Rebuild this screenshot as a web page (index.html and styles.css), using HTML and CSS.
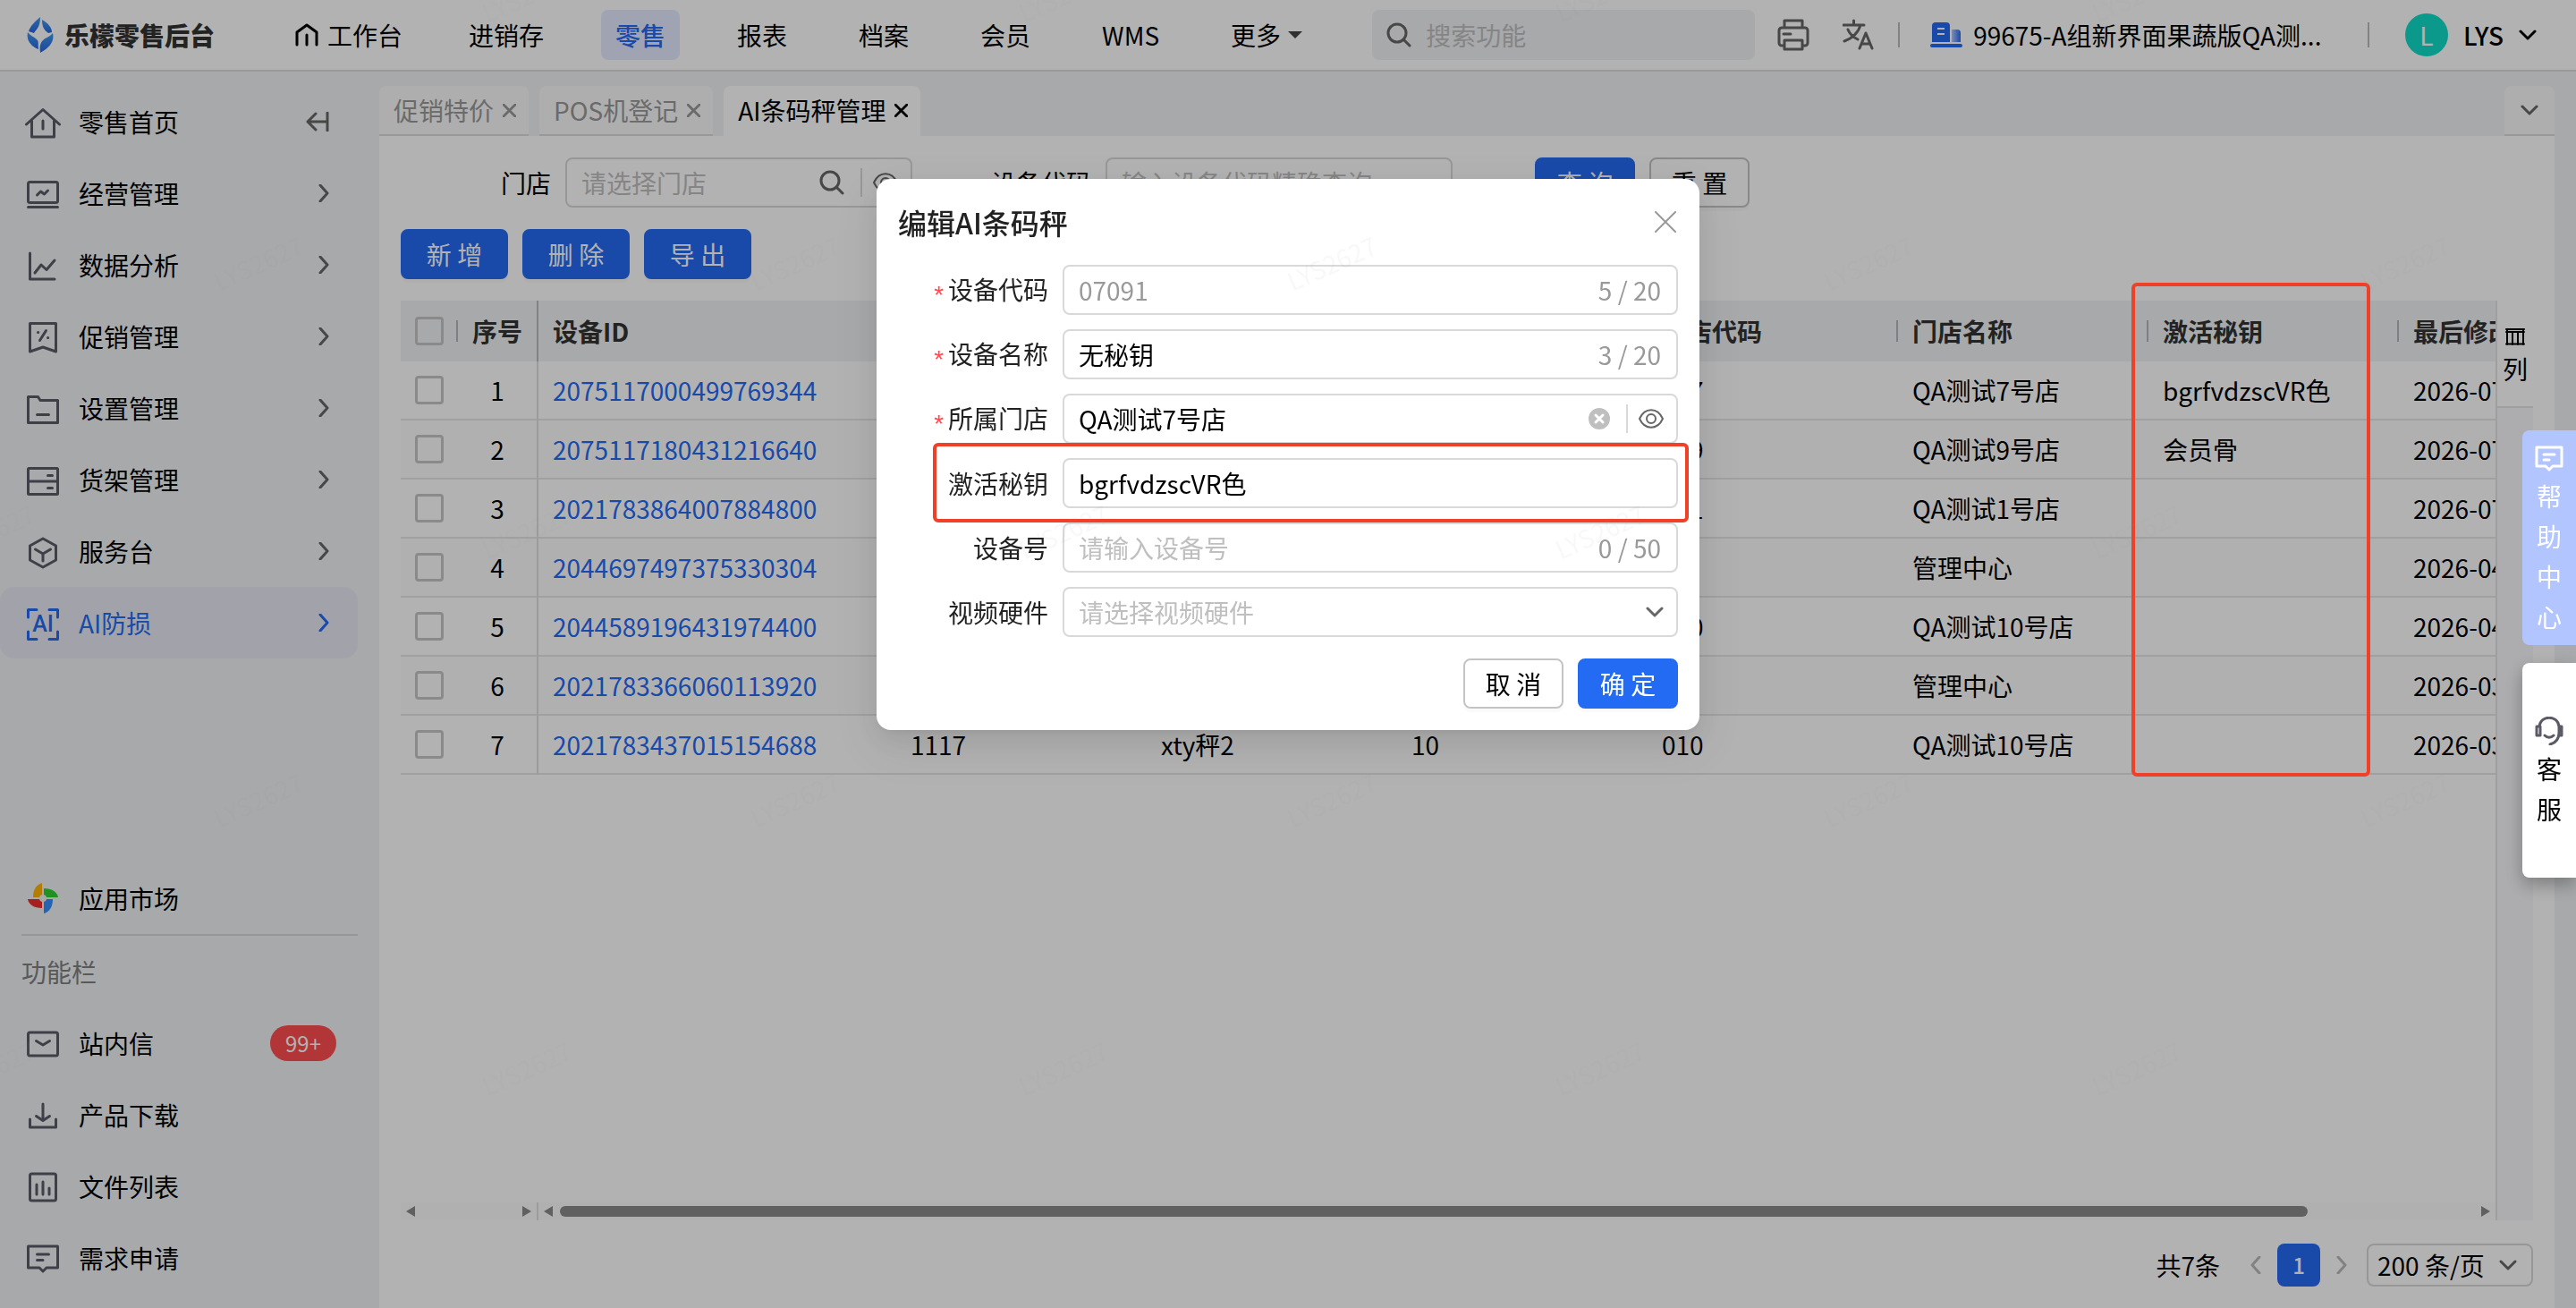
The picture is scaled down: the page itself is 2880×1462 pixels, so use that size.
FILE: index.html
```html
<!DOCTYPE html>
<html lang="zh-CN">
<head>
    <meta charset="UTF-8">
    <meta name="viewport" content="width=device-width, initial-scale=1.0">
    <title>乐檬零售后台</title>
    <link rel="stylesheet" href="styles.css">
</head>
<body>
    <div class="app">
        <header class="topbar">
            <a class="brand" href="#">
                <svg class="brand-logo" viewBox="0 0 30 40" aria-hidden="true">
                    <defs>
                        <linearGradient id="leaf" x1="0" y1="0" x2="0" y2="1">
                            <stop offset="0" stop-color="#3f9bf0"/>
                            <stop offset="1" stop-color="#2a66e0"/>
                        </linearGradient>
                    </defs>
                    <g fill="url(#leaf)">
                        <path d="M15 0C9 5 4 10 2 16L8 18C10 14 15 12 15 0Z"/>
                        <path d="M17 3C24 7 28 12 28 17L24 18C20 15 17 12 17 3Z"/>
                        <path d="M1 17C-1 26 5 33 13 36C12 29 14 28 11 25C8 22 4 21 1 17Z"/>
                        <path d="M29 18C31 27 26 34 15 40C14 33 15 29 18 26C21 23 26 22 29 18Z"/>
                    </g>
                </svg>
                <span>乐檬零售后台</span>
            </a>
            <nav class="main-nav">
                <a class="nav-item nav-home" href="#">
                    <svg class="home-icon" viewBox="0 0 26 26" aria-hidden="true"><path d="M2 24V10L13 2L24 10V24M13 13V24"/></svg>
                    工作台
                </a>
                <a class="nav-item" href="#">进销存</a>
                <a class="nav-item active" href="#">零售</a>
                <a class="nav-item" href="#">报表</a>
                <a class="nav-item" href="#">档案</a>
                <a class="nav-item" href="#">会员</a>
                <a class="nav-item" href="#">WMS</a>
                <a class="nav-item" href="#">更多<span class="caret"></span></a>
            </nav>
            <label class="search">
                <svg class="icon-28" viewBox="0 0 28 28" aria-hidden="true"><circle cx="12" cy="12" r="10"/><path d="M19 19l7 7"/></svg>
                <input type="text" placeholder="搜索功能" aria-label="搜索功能">
            </label>
            <div class="tools">
                <button class="icon-btn" type="button" aria-label="打印">
                    <svg class="icon-36" viewBox="0 0 36 36" aria-hidden="true"><path d="M8 10V2h20v8M8 30H5a3 3 0 0 1-3-3V13a3 3 0 0 1 3-3h26a3 3 0 0 1 3 3v14a3 3 0 0 1-3 3h-3M8 24h20v10H8zM7 17h8"/></svg>
                </button>
                <button class="icon-btn" type="button" aria-label="语言">
                    <svg class="icon-36" viewBox="0 0 36 36" aria-hidden="true"><path d="M1 7h23M12.500 2v5M20 7C18 15 11 22 2 25M6 12c2 5 7 9 11 11M19 33l7-17 7 17M21 28h10"/></svg>
                </button>
            </div>
            <div class="company">
                <svg class="icon-36" viewBox="0 0 36 36" aria-hidden="true">
                    <defs>
                        <linearGradient id="tower"><stop offset="0" stop-color="#b5c9ff"/><stop offset="1" stop-color="#246bf3"/></linearGradient>
                    </defs>
                    <path fill="#246bf3" d="M2 8a4 4 0 0 1 4-4h12a4 4 0 0 1 4 4v18H2z"/>
                    <path fill="url(#tower)" d="M24 12h6a4 4 0 0 1 4 4v10H24z"/>
                    <rect fill="#246bf3" y="28" width="36" height="4" rx="2"/>
                    <path fill="#fff" d="M8 10h8v2H8zM8 16h8v2H8z"/>
                </svg>
                <span>99675-A组新界面果蔬版QA测...</span>
            </div>
            <button class="user" type="button">
                <span class="avatar">L</span>
                <span>LYS</span>
                <svg class="chevron" viewBox="0 0 20 12" aria-hidden="true"><path d="M2 2l8 8 8-8"/></svg>
            </button>
        </header>

        <div class="body">
            <aside class="sidebar">
                <a class="side-item" href="#">
                    <svg class="side-icon" viewBox="0 0 40 40" aria-hidden="true"><path d="M1.500 23L20 6.500L38.500 23M7.500 19V37H32.500V19M20 19V28"/></svg>
                    <span>零售首页</span>
                    <svg class="fold" viewBox="0 0 26 22" aria-hidden="true"><path d="M11 2L2 11L11 20M2 11H24M24 1V21"/></svg>
                </a>
                <a class="side-item" href="#">
                    <svg class="side-icon" viewBox="0 0 40 40" aria-hidden="true"><rect x="3.500" y="7.500" width="33" height="23" rx="2"/><path d="M3.500 35.500H36.500M13.500 22l4-4 4 3 4-4"/></svg>
                    <span>经营管理</span>
                    <svg class="arrow" viewBox="0 0 12 20" aria-hidden="true"><path d="M2 1l8 9-8 9"/></svg>
                </a>
                <a class="side-item" href="#">
                    <svg class="side-icon" viewBox="0 0 40 40" aria-hidden="true"><path d="M5.500 7V36H33M11 29L18 20L24 25.500L33 15"/></svg>
                    <span>数据分析</span>
                    <svg class="arrow" viewBox="0 0 12 20" aria-hidden="true"><path d="M2 1l8 9-8 9"/></svg>
                </a>
                <a class="side-item" href="#">
                    <svg class="side-icon" viewBox="0 0 40 40" aria-hidden="true"><path d="M5.500 5.500H34.500V37L20 32L5.500 37ZM23.500 13.500L16.500 24.500M14.500 15.500h.2M25.500 21.500h.2"/></svg>
                    <span>促销管理</span>
                    <svg class="arrow" viewBox="0 0 12 20" aria-hidden="true"><path d="M2 1l8 9-8 9"/></svg>
                </a>
                <a class="side-item" href="#">
                    <svg class="side-icon" viewBox="0 0 40 40" aria-hidden="true"><path d="M3.500 7.500H14.500L17 11.500H36.500V36.500H3.500ZM13.500 27.500H26.500"/></svg>
                    <span>设置管理</span>
                    <svg class="arrow" viewBox="0 0 12 20" aria-hidden="true"><path d="M2 1l8 9-8 9"/></svg>
                </a>
                <a class="side-item" href="#">
                    <svg class="side-icon" viewBox="0 0 40 40" aria-hidden="true"><rect x="3.500" y="7.500" width="33" height="29" rx="1"/><path d="M3.500 22H36.500M25.500 15.500H30.500M25.500 29.500H30.500"/></svg>
                    <span>货架管理</span>
                    <svg class="arrow" viewBox="0 0 12 20" aria-hidden="true"><path d="M2 1l8 9-8 9"/></svg>
                </a>
                <a class="side-item" href="#">
                    <svg class="side-icon" viewBox="0 0 40 40" aria-hidden="true"><path d="M20 6L34.500 14V30L20 38L5.500 30V14ZM11.500 18L20 23L28.500 18M20 23V31"/></svg>
                    <span>服务台</span>
                    <svg class="arrow" viewBox="0 0 12 20" aria-hidden="true"><path d="M2 1l8 9-8 9"/></svg>
                </a>
                <a class="side-item active" href="#">
                    <svg class="side-icon" viewBox="0 0 40 40" aria-hidden="true"><path d="M3.500 14V5.500H13M27 5.500H36.500V14M36.500 30V38.500H27M13 38.500H3.500V30"/><text class="icon-text" x="20" y="30">AI</text></svg>
                    <span>AI防损</span>
                    <svg class="arrow" viewBox="0 0 12 20" aria-hidden="true"><path d="M2 1l8 9-8 9"/></svg>
                </a>

                <div class="side-bottom">
                    <a class="side-item" href="#">
                        <svg class="market-icon" viewBox="0 0 40 40" aria-hidden="true">
                            <path fill="#ffb300" d="M19 3V19H9C9 11 12 5 19 3Z"/>
                            <path fill="#2ed12e" d="M21 9C30 9 36 13 37 19H21Z"/>
                            <path fill="#3490ff" d="M21 21H31C31 29 28 35 21 37Z"/>
                            <path fill="#f02d2d" d="M3 21H19V31C10 31 4 27 3 21Z"/>
                            <circle fill="#f0f2f5" cx="20" cy="20" r="4"/>
                        </svg>
                        <span>应用市场</span>
                    </a>
                    <p class="side-title">功能栏</p>
                    <a class="side-item" href="#">
                        <svg class="side-icon" viewBox="0 0 40 40" aria-hidden="true"><rect x="3.500" y="8" width="33" height="26" rx="2"/><path d="M12.500 17.500L20 22L27.500 17.500"/></svg>
                        <span>站内信</span>
                        <span class="badge">99+</span>
                    </a>
                    <a class="side-item" href="#">
                        <svg class="side-icon" viewBox="0 0 40 40" aria-hidden="true"><path d="M20 8V26M12.500 21.500L20 26.500L27.500 21.500M5.500 25V34H34.500V25"/></svg>
                        <span>产品下载</span>
                    </a>
                    <a class="side-item" href="#">
                        <svg class="side-icon" viewBox="0 0 40 40" aria-hidden="true"><rect x="5.500" y="6" width="29" height="30" rx="2"/><path d="M13 18V29M20 15V29M27 22V29"/></svg>
                        <span>文件列表</span>
                    </a>
                    <a class="side-item" href="#">
                        <svg class="side-icon" viewBox="0 0 40 40" aria-hidden="true"><path d="M3.500 7H36.500V31H24L20 35L16 31H3.500ZM13.500 16H26.500M13.500 22.500H20"/></svg>
                        <span>需求申请</span>
                    </a>
                </div>
            </aside>

            <main class="content">
                <div class="tabs">
                    <div class="tab">促销特价<svg class="tab-close" viewBox="0 0 16 16" aria-hidden="true"><path d="M1 1l14 14M15 1L1 15"/></svg></div>
                    <div class="tab">POS机登记<svg class="tab-close" viewBox="0 0 16 16" aria-hidden="true"><path d="M1 1l14 14M15 1L1 15"/></svg></div>
                    <div class="tab active">AI条码秤管理<svg class="tab-close" viewBox="0 0 16 16" aria-hidden="true"><path d="M1 1l14 14M15 1L1 15"/></svg></div>
                    <button class="tab tab-more" type="button" aria-label="更多标签"><svg class="chevron" viewBox="0 0 20 12" aria-hidden="true"><path d="M2 2l8 8 8-8"/></svg></button>
                </div>

                <section class="panel">
                    <form class="filters">
                        <label class="filter-label" for="f-store">门店</label>
                        <div class="control">
                            <input id="f-store" type="text" placeholder="请选择门店">
                            <svg class="icon-28" viewBox="0 0 28 28" aria-hidden="true"><circle cx="12" cy="12" r="10"/><path d="M19 19l7 7"/></svg>
                            <span class="split"></span>
                            <svg class="icon-28 eye" viewBox="0 0 28 28" aria-hidden="true"><path d="M1 14C7 1 21 1 27 14C21 27 7 27 1 14Z"/><circle cx="14" cy="14" r="5"/></svg>
                        </div>
                        <label class="filter-label" for="f-code">设备代码</label>
                        <div class="control">
                            <input id="f-code" type="text" placeholder="输入设备代码精确查询">
                        </div>
                        <div class="filter-actions">
                            <button class="btn primary" type="button">查 询</button>
                            <button class="btn" type="button">重 置</button>
                        </div>
                    </form>

                    <div class="actions">
                        <button class="btn primary wide" type="button">新 增</button>
                        <button class="btn primary wide" type="button">删 除</button>
                        <button class="btn primary wide" type="button">导 出</button>
                    </div>

                    <div class="grid">
                        <div class="grid-main">
                            <div class="grid-view">
                                <table>
                                    <colgroup>
                                        <col class="c-check"><col class="c-no"><col class="c-id"><col class="c"><col class="c"><col class="c"><col class="c"><col class="c"><col class="c"><col class="c">
                                    </colgroup>
                                    <thead>
                                        <tr>
                                            <th><input type="checkbox" aria-label="全选"></th>
                                            <th class="no">序号</th>
                                            <th>设备ID</th>
                                            <th>设备代码</th>
                                            <th>设备名称</th>
                                            <th>设备号</th>
                                            <th>门店代码</th>
                                            <th>门店名称</th>
                                            <th>激活秘钥</th>
                                            <th>最后修改时间</th>
                                        </tr>
                                    </thead>
                                    <tbody>
                                        <tr><td><input type="checkbox" aria-label="选择 1"></td><td class="no">1</td><td><a href="#">2075117000499769344</a></td><td>07091</td><td>无秘钥</td><td></td><td>007</td><td>QA测试7号店</td><td>bgrfvdzscVR色</td><td>2026-07</td></tr>
                                        <tr><td><input type="checkbox" aria-label="选择 2"></td><td class="no">2</td><td><a href="#">2075117180431216640</a></td><td></td><td></td><td></td><td>009</td><td>QA测试9号店</td><td>会员骨</td><td>2026-07</td></tr>
                                        <tr><td><input type="checkbox" aria-label="选择 3"></td><td class="no">3</td><td><a href="#">2021783864007884800</a></td><td></td><td></td><td></td><td>001</td><td>QA测试1号店</td><td></td><td>2026-07</td></tr>
                                        <tr><td><input type="checkbox" aria-label="选择 4"></td><td class="no">4</td><td><a href="#">2044697497375330304</a></td><td></td><td></td><td></td><td>99</td><td>管理中心</td><td></td><td>2026-04</td></tr>
                                        <tr><td><input type="checkbox" aria-label="选择 5"></td><td class="no">5</td><td><a href="#">2044589196431974400</a></td><td></td><td></td><td></td><td>010</td><td>QA测试10号店</td><td></td><td>2026-04</td></tr>
                                        <tr><td><input type="checkbox" aria-label="选择 6"></td><td class="no">6</td><td><a href="#">2021783366060113920</a></td><td></td><td></td><td></td><td>99</td><td>管理中心</td><td></td><td>2026-03</td></tr>
                                        <tr><td><input type="checkbox" aria-label="选择 7"></td><td class="no">7</td><td><a href="#">2021783437015154688</a></td><td>1117</td><td>xty秤2</td><td>10</td><td>010</td><td>QA测试10号店</td><td></td><td>2026-03</td></tr>
                                    </tbody>
                                </table>
                            </div>
                            <div class="scrollbars">
                                <div class="scroll pinned"><span class="tri left"></span><span class="tri right"></span></div>
                                <div class="scroll"><span class="tri left"></span><span class="track"><span class="thumb"></span></span><span class="tri right"></span></div>
                            </div>
                        </div>
                        <div class="grid-side">
                            <button class="col-btn" type="button">
                                <svg viewBox="0 0 22 20" aria-hidden="true"><path d="M1 2H21M1 5H21M1 18.500H21M2 2V19M8 5V19M14 5V19M20 2V19"/></svg>
                                列
                            </button>
                        </div>
                    </div>

                    <div class="pager">
                        <span>共7条</span>
                        <button class="page-arrow" type="button" aria-label="上一页"><svg class="arrow" viewBox="0 0 12 20" aria-hidden="true"><path d="M10 1l-8 9 8 9"/></svg></button>
                        <button class="page-num" type="button">1</button>
                        <button class="page-arrow" type="button" aria-label="下一页"><svg class="arrow" viewBox="0 0 12 20" aria-hidden="true"><path d="M2 1l8 9-8 9"/></svg></button>
                        <div class="page-size">
                            <select aria-label="每页条数"><option>200 条/页</option></select>
                            <svg class="chevron" viewBox="0 0 20 12" aria-hidden="true"><path d="M2 2l8 8 8-8"/></svg>
                        </div>
                    </div>
                </section>
            </main>
        </div>
    </div>

    <div class="mask">
        <div class="modal" role="dialog" aria-labelledby="modal-title">
            <div class="modal-head">
                <h2 id="modal-title">编辑AI条码秤</h2>
                <button class="modal-close" type="button" aria-label="关闭"><svg viewBox="0 0 24 24" aria-hidden="true"><path d="M1 1l22 22M23 1L1 23"/></svg></button>
            </div>
            <form class="modal-form">
                <div class="row">
                    <label class="required" for="m-code">设备代码</label>
                    <div class="control"><input id="m-code" type="text" value="07091" disabled><span class="count">5 / 20</span></div>
                </div>
                <div class="row">
                    <label class="required" for="m-name">设备名称</label>
                    <div class="control"><input id="m-name" type="text" value="无秘钥"><span class="count">3 / 20</span></div>
                </div>
                <div class="row">
                    <label class="required" for="m-store">所属门店</label>
                    <div class="control">
                        <input id="m-store" type="text" value="QA测试7号店">
                        <svg class="clear" viewBox="0 0 24 24" aria-hidden="true"><circle cx="12" cy="12" r="12"/><path d="M8 8l8 8M16 8l-8 8"/></svg>
                        <span class="split"></span>
                        <svg class="icon-28 eye" viewBox="0 0 28 28" aria-hidden="true"><path d="M1 14C7 1 21 1 27 14C21 27 7 27 1 14Z"/><circle cx="14" cy="14" r="5"/></svg>
                    </div>
                </div>
                <div class="row marked">
                    <label for="m-key">激活秘钥</label>
                    <div class="control"><input id="m-key" type="text" value="bgrfvdzscVR色"></div>
                </div>
                <div class="row">
                    <label for="m-no">设备号</label>
                    <div class="control"><input id="m-no" type="text" placeholder="请输入设备号"><span class="count">0 / 50</span></div>
                </div>
                <div class="row">
                    <label for="m-video">视频硬件</label>
                    <div class="control">
                        <select id="m-video" class="empty"><option>请选择视频硬件</option></select>
                        <svg class="chevron" viewBox="0 0 20 12" aria-hidden="true"><path d="M2 2l8 8 8-8"/></svg>
                    </div>
                </div>
                <div class="modal-foot">
                    <button class="btn" type="button">取 消</button>
                    <button class="btn primary" type="button">确 定</button>
                </div>
            </form>
        </div>
    </div>

    <div class="column-mark"></div>

    <div class="floats">
        <button class="float help" type="button">
            <svg viewBox="0 0 32 32" aria-hidden="true"><path d="M2 4H30V25H20L16 29L12 25H2ZM10 12H22M10 18H16"/></svg>
            帮助中心
        </button>
        <button class="float service" type="button">
            <svg viewBox="0 0 32 32" aria-hidden="true"><path d="M5 11C6 -2 26 -2 27 11V18C27 25 24 29 17 31M5 11H2V21H6V11M27 11H30V21H27M11 21C14 24 18 24 21 21"/></svg>
            客服
        </button>
    </div>

    <svg class="watermark" aria-hidden="true">
        <defs>
            <pattern id="wm" x="145" y="122" width="600" height="600" patternUnits="userSpaceOnUse">
                <text x="100" y="204" transform="rotate(-24 100 204)">LYS2627</text>
                <text x="400" y="504" transform="rotate(-24 400 504)">LYS2627</text>
            </pattern>
        </defs>
        <rect width="100%" height="100%" fill="url(#wm)"/>
    </svg>
</body>
</html>
```

FILE: styles.css
```css
* {
    box-sizing: border-box;
    margin: 0;
    padding: 0;
}
body {
    font-family: "Noto Sans CJK SC", sans-serif;
    font-size: 28px;
    line-height: 44px;
    color: #000;
    overflow: hidden;
}
a {
    color: inherit;
    text-decoration: none;
}
button, input, select {
    font: inherit;
    color: inherit;
    background: none;
    border: none;
    outline: none;
}
button {
    cursor: pointer;
}
svg {
    display: block;
    flex: none;
    fill: none;
    stroke-linecap: round;
    stroke-linejoin: round;
}
.app {
    height: 100vh;
    display: flex;
    flex-direction: column;
    background: #f0f2f5;
}

/* top bar */
.topbar {
    display: flex;
    align-items: center;
    height: 80px;
    padding: 0 44px 0 30px;
    background: #fff;
    border-bottom: 2px solid #dcdcdc;
}
.brand {
    display: flex;
    align-items: center;
    gap: 12px;
    width: 290px;
    font-weight: 900;
    color: #333;
}
.brand-logo {
    width: 30px;
    height: 40px;
}
.main-nav {
    display: flex;
    gap: 48px;
}
.nav-item {
    display: flex;
    align-items: center;
    height: 56px;
    padding: 0 16px;
    border-radius: 8px;
}
.nav-item.active {
    background: #e6eaff;
    color: #246bf3;
    font-weight: 500;
}
.nav-home {
    gap: 10px;
    padding: 0 10px;
}
.home-icon {
    width: 26px;
    height: 26px;
    stroke: #000;
    stroke-width: 3;
}
.caret {
    margin-left: 8px;
    border: 8px solid transparent;
    border-top-color: #444;
    border-bottom: none;
}
.search {
    display: flex;
    align-items: center;
    gap: 16px;
    width: 428px;
    height: 56px;
    margin-left: 62px;
    padding: 0 16px;
    background: #f0f2f5;
    border-radius: 8px;
}
.search input {
    flex: 1;
    min-width: 0;
}
input::placeholder {
    color: #bfbfbf;
    opacity: 1;
}
.icon-28 {
    width: 28px;
    height: 28px;
    stroke: #666;
    stroke-width: 3;
}
.icon-28.eye {
    stroke-width: 2;
}
.icon-36 {
    width: 36px;
    height: 36px;
}
.tools {
    display: flex;
    gap: 37px;
    margin-left: 25px;
}
.icon-btn svg {
    stroke: #666;
    stroke-width: 3;
}
.company {
    display: flex;
    align-items: center;
    gap: 12px;
    margin-left: 26px;
    border-left: 2px solid #bbb;
    padding-left: 34px;
    height: 28px;
}
.user {
    display: flex;
    align-items: center;
    gap: 17px;
    height: 28px;
    margin-left: auto;
    padding-left: 40px;
    border-left: 2px solid #bbb;
    font-weight: 500;
}
.avatar {
    width: 48px;
    height: 48px;
    line-height: 48px;
    border-radius: 50%;
    background: #0fdcc8;
    color: #fff;
    font-weight: 400;
    text-align: center;
}
.chevron {
    width: 20px;
    height: 12px;
    stroke: #666;
    stroke-width: 3;
}
.user .chevron {
    stroke: #000;
}

/* sidebar */
.body {
    flex: 1;
    display: flex;
    min-height: 0;
}
.sidebar {
    flex: none;
    display: flex;
    flex-direction: column;
    width: 424px;
    padding: 16px 24px 16px 0;
}
.side-item {
    display: flex;
    align-items: center;
    gap: 20px;
    height: 80px;
    padding: 0 32px 0 28px;
    border-radius: 16px;
}
.side-item.active {
    background: #e8eaf4;
    color: #246bf3;
}
.side-icon, .market-icon {
    width: 40px;
    height: 40px;
}
.side-icon {
    stroke: #5b5b68;
    stroke-width: 3;
}
.side-item .arrow {
    margin-left: auto;
}
.side-item .fold {
    width: 26px;
    height: 22px;
    margin-left: auto;
    stroke: #666;
    stroke-width: 3;
}
.arrow {
    width: 12px;
    height: 20px;
    stroke: #666;
    stroke-width: 3;
}
.side-item.active svg {
    stroke: #246bf3;
}
.side-item .icon-text {
    font-family: Roboto, sans-serif;
    font-size: 25px;
    font-weight: 500;
    text-anchor: middle;
    fill: #246bf3;
    stroke: none;
}
.side-bottom {
    margin-top: auto;
}
.side-title {
    height: 82px;
    margin-left: 24px;
    padding: 18px 0;
    border-top: 2px solid #d5d7da;
    color: #808080;
}
.badge {
    margin-left: auto;
    margin-right: -8px;
    height: 40px;
    padding: 0 17px;
    border-radius: 20px;
    background: #ff4d4f;
    color: #fff;
    font-size: 24px;
    line-height: 40px;
}

/* content */
.content {
    flex: 1;
    display: flex;
    flex-direction: column;
    min-width: 0;
    padding: 16px 24px 0 0;
}
.tabs {
    display: flex;
    gap: 12px;
}
.tab {
    display: flex;
    align-items: center;
    gap: 10px;
    height: 56px;
    padding: 0 14px 0 16px;
    background: #fafafa;
    border-radius: 8px 8px 0 0;
    border-bottom: 2px solid #dcdcdc;
    color: #999;
}
.tab.active {
    background: #fff;
    border-color: #fff;
    color: #000;
}
.tab-close {
    width: 15px;
    height: 15px;
    stroke: currentColor;
    stroke-width: 3;
}
.tab-more {
    width: 56px;
    margin-left: auto;
    padding: 0 18px;
}
.panel {
    flex: 1;
    display: flex;
    flex-direction: column;
    min-height: 0;
    padding: 24px;
    background: #fff;
}
.filters {
    display: flex;
    align-items: center;
    gap: 16px;
}
.filter-label {
    width: 168px;
    text-align: right;
}
.filters .control {
    width: 388px;
}
.control + .filter-label {
    width: 184px;
}
.filter-actions {
    display: flex;
    gap: 16px;
    margin-left: 76px;
}
.control {
    display: flex;
    align-items: center;
    height: 56px;
    padding: 0 14px 0 16px;
    background: #fff;
    border: 2px solid #d9d9d9;
    border-radius: 8px;
}
.control input, .control select {
    flex: 1;
    min-width: 0;
    height: 100%;
}
select {
    appearance: none;
}
select.empty {
    color: #bfbfbf;
}
.split {
    width: 2px;
    height: 32px;
    margin: 0 12px 0 18px;
    background: #d9d9d9;
}
.btn {
    min-width: 112px;
    height: 56px;
    background: #fff;
    border: 2px solid #c4c4c4;
    border-radius: 8px;
    box-shadow: 0 4px 0 rgba(0, 0, 0, 0.02);
}
.btn.primary {
    background: #246bf3;
    border-color: #246bf3;
    color: #fff;
}
.btn.wide {
    min-width: 120px;
}
.actions {
    display: flex;
    gap: 16px;
    margin: 24px 0;
}

/* grid */
.grid {
    flex: 1;
    display: flex;
    min-height: 0;
}
.grid-main {
    flex: 1;
    display: flex;
    flex-direction: column;
    min-width: 0;
}
.grid-view {
    flex: 1;
    overflow: hidden;
}
table {
    width: 2514px;
    table-layout: fixed;
    border-collapse: separate;
    border-spacing: 0;
}
.c-check {
    width: 64px;
}
.c-no {
    width: 90px;
}
.c-id {
    width: 400px;
}
.c {
    width: 280px;
}
th, td {
    padding: 0 16px;
    text-align: left;
    white-space: nowrap;
}
th {
    height: 68px;
    background: linear-gradient(#b4b6bd, #b4b6bd) no-repeat right center / 2px 24px #f0f2f5;
    color: #333;
    font-weight: 700;
}
td {
    height: 66px;
    border-bottom: 2px solid #e6e6e6;
}
tbody tr:nth-child(even) td {
    background: #fcfcfc;
}
th.no, td.no {
    padding: 0;
    text-align: center;
    border-right: 2px solid #dedede;
}
th.no {
    background: #f0f2f5;
    border-right-color: #b9bbbf;
}
td a {
    color: #246bf3;
}
input[type="checkbox"] {
    appearance: none;
    display: block;
    width: 32px;
    height: 32px;
    border: 3px solid #c6c6c6;
    border-radius: 4px;
}
.scrollbars {
    display: flex;
    height: 20px;
}
.scroll {
    flex: 1;
    display: flex;
    align-items: center;
    justify-content: space-between;
    padding: 0 6px;
    background: #fcfcfc;
}
.scroll.pinned {
    flex: none;
    width: 154px;
    border-right: 2px solid #e0e0e0;
}
.tri {
    border: 6px solid transparent;
}
.tri.left {
    border-right: 10px solid #8a8a8a;
    border-left: none;
}
.tri.right {
    border-left: 10px solid #8a8a8a;
    border-right: none;
}
.track {
    flex: 1;
    margin: 0 8px;
}
.thumb {
    display: block;
    width: 91.3%;
    height: 12px;
    border-radius: 6px;
    background: #8a8a8a;
}
.grid-side {
    width: 42px;
    background: #f8f8fc;
    border-left: 2px solid #e4e4e8;
}
.col-btn {
    display: flex;
    flex-direction: column;
    align-items: center;
    gap: 4px;
    width: 100%;
    height: 120px;
    padding-top: 30px;
    background: #fff;
    border-bottom: 2px solid #e4e4e8;
}
.col-btn svg {
    width: 22px;
    height: 20px;
    stroke: #000;
    stroke-width: 2;
}
.pager {
    display: flex;
    align-items: center;
    justify-content: flex-end;
    height: 48px;
    margin-top: 26px;
}
.page-arrow {
    padding: 0 18px;
}
.page-arrow:first-of-type {
    padding-left: 34px;
}
.page-arrow .arrow {
    stroke: #bbb;
}
.page-num {
    width: 48px;
    height: 48px;
    border-radius: 8px;
    background: #246bf3;
    color: #fff;
    font-size: 24px;
    font-weight: 500;
}
.page-size {
    display: flex;
    align-items: center;
    width: 186px;
    height: 48px;
    margin-left: 4px;
    padding: 0 16px 0 10px;
    border: 2px solid #d9d9d9;
    border-radius: 8px;
}
.page-size select {
    flex: 1;
    min-width: 0;
}

/* modal */
.mask {
    position: fixed;
    inset: 0;
    padding-top: 200px;
    background: rgba(0, 0, 0, 0.3);
}
.modal {
    width: 920px;
    margin: 0 auto;
    padding: 24px;
    background: #fff;
    border-radius: 16px;
    box-shadow: 0 12px 32px rgba(0, 0, 0, 0.08), 0 6px 12px -8px rgba(0, 0, 0, 0.12), 0 18px 56px 16px rgba(0, 0, 0, 0.05);
}
.modal-head {
    display: flex;
    align-items: center;
    justify-content: space-between;
    height: 48px;
    margin-bottom: 24px;
    padding-right: 2px;
}
.modal-head h2 {
    font-size: 32px;
    font-weight: 500;
    line-height: 48px;
    color: #222;
}
.modal-close svg {
    width: 24px;
    height: 24px;
    stroke: #999;
    stroke-width: 2;
}
.modal-form {
    display: flex;
    flex-direction: column;
    gap: 16px;
}
.row {
    position: relative;
    display: flex;
    align-items: center;
    gap: 16px;
}
.row label {
    width: 168px;
    text-align: right;
    color: #222;
}
.row .control {
    flex: 1;
}
.required::before {
    content: "*";
    margin-right: 2px;
    font-family: "Liberation Mono", monospace;
    line-height: 1;
    vertical-align: -5px;
    color: #ff4d4f;
}
input:disabled {
    color: #999;
}
.count {
    margin-right: 3px;
    color: #999;
}
.clear {
    width: 24px;
    height: 24px;
}
.clear circle {
    fill: #bfbfbf;
}
.clear path {
    stroke: #fff;
    stroke-width: 3;
}
.marked::after {
    content: "";
    position: absolute;
    inset: -17px -12px -16px 39px;
    border: 4px solid #f04128;
    border-radius: 6px;
    pointer-events: none;
}
.modal-foot {
    display: flex;
    justify-content: flex-end;
    gap: 16px;
    margin-top: 8px;
}

/* things that float over the page */
.column-mark {
    position: fixed;
    top: 316px;
    right: 230px;
    width: 267px;
    height: 552px;
    border: 4px solid #f04128;
    border-radius: 6px;
    pointer-events: none;
}
.floats {
    position: fixed;
    top: 481px;
    right: 0;
    display: flex;
    flex-direction: column;
    gap: 20px;
}
.float {
    display: flex;
    flex-direction: column;
    align-items: center;
    justify-content: center;
    gap: 4px;
    width: 60px;
    height: 240px;
    padding: 6px 16px 0;
    border-radius: 8px 0 0 8px;
    line-height: 45px;
    word-break: break-all;
}
.float svg {
    width: 32px;
    height: 32px;
    stroke: currentColor;
    stroke-width: 3;
}
.help {
    background: #b3c5ff;
    color: #fff;
}
.service {
    background: #fff;
    box-shadow: 0 8px 20px rgba(0, 0, 0, 0.3);
}
.service svg {
    stroke: #5b5b68;
}
.watermark {
    position: fixed;
    inset: 0;
    width: 100%;
    height: 100%;
    pointer-events: none;
}
.watermark text {
    font-size: 28px;
    fill: rgba(128, 128, 128, 0.06);
}
```
